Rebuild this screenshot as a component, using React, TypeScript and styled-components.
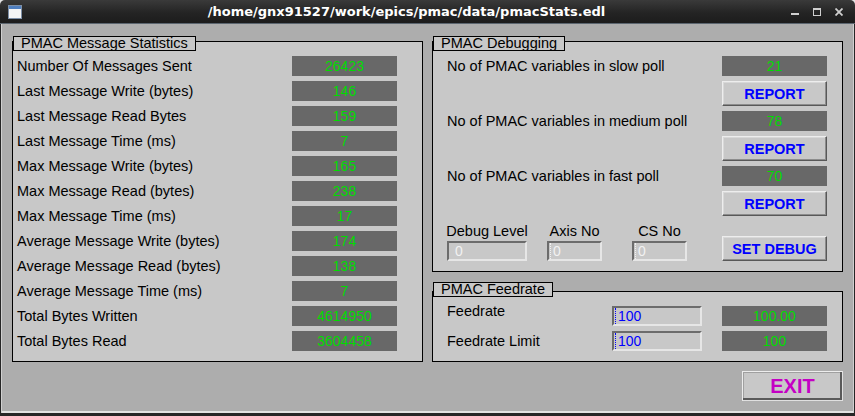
import styled, { createGlobalStyle } from "styled-components";

const GlobalStyle = createGlobalStyle`
  html, body {
    margin: 0;
    padding: 0;
    background: #e4e4e4;
  }
  body {
    font-family: "Liberation Sans", Arial, sans-serif;
  }
`;

const stats = [
  { label: "Number Of Messages Sent", value: "26423" },
  { label: "Last Message Write (bytes)", value: "146" },
  { label: "Last Message Read Bytes", value: "159" },
  { label: "Last Message Time (ms)", value: "7" },
  { label: "Max Message Write (bytes)", value: "165" },
  { label: "Max Message Read (bytes)", value: "238" },
  { label: "Max Message Time (ms)", value: "17" },
  { label: "Average Message Write (bytes)", value: "174" },
  { label: "Average Message Read (bytes)", value: "138" },
  { label: "Average Message Time (ms)", value: "7" },
  { label: "Total Bytes Written", value: "4614950" },
  { label: "Total Bytes Read", value: "3604458" },
];

const polls = [
  { label: "No of PMAC variables in slow poll", value: "21" },
  { label: "No of PMAC variables in medium poll", value: "78" },
  { label: "No of PMAC variables in fast poll", value: "70" },
];

const WindowIcon = () => (
  <svg width="14" height="14" viewBox="0 0 14 14">
    <rect x="0.5" y="0.5" width="13" height="13" fill="#f4f4f4" stroke="#7d8fa6" />
    <rect x="1" y="1" width="12" height="3" fill="#4f7fc0" />
  </svg>
);

const MinIcon = () => (
  <svg width="8" height="8" viewBox="0 0 8 8">
    <rect x="0" y="5" width="8" height="2" fill="#cfcfcf" />
  </svg>
);

const MaxIcon = () => (
  <svg width="8" height="8" viewBox="0 0 8 8">
    <rect x="0.5" y="0.5" width="7" height="7" fill="none" stroke="#cfcfcf" />
    <rect x="0" y="0" width="8" height="2" fill="#cfcfcf" />
  </svg>
);

const CloseIcon = () => (
  <svg width="8" height="8" viewBox="0 0 8 8">
    <path d="M0.5 0.5 L7.5 7.5 M7.5 0.5 L0.5 7.5" stroke="#cfcfcf" strokeWidth="1.8" />
  </svg>
);

const App = () => {
  return (
    <>
      <GlobalStyle />
      <Window>
        <TitleBar>
          <WindowIcon />
          <Title>/home/gnx91527/work/epics/pmac/data/pmacStats.edl</Title>
          <Controls>
            <MinIcon />
            <MaxIcon />
            <CloseIcon />
          </Controls>
        </TitleBar>
        <Body>
          <Column>
            <Section>
              <Tab>PMAC Message Statistics</Tab>
              <Frame $overlap={-10} $pad="14px 25px 10px 4px">
                <StatsGrid>
                  {stats.map((s) => (
                    <Row key={s.label}>
                      <Label>{s.label}</Label>
                      <Value>{s.value}</Value>
                    </Row>
                  ))}
                </StatsGrid>
              </Frame>
            </Section>
          </Column>
          <Column>
            <Section>
              <Tab>PMAC Debugging</Tab>
              <Frame $overlap={-10} $pad="14px 15px 10px 14px">
                <DebugGrid>
                  {polls.map((p) => (
                    <Row key={p.label}>
                      <Label>{p.label}</Label>
                      <Value>{p.value}</Value>
                      <span />
                      <Button>REPORT</Button>
                    </Row>
                  ))}
                  <DebugFields>
                    <Field $w={80}>
                      <FieldLabel>Debug Level</FieldLabel>
                      <Entry $pad={6} $color="#f2f2f2">0</Entry>
                    </Field>
                    <Field $w={55} $ml={20}>
                      <FieldLabel>Axis No</FieldLabel>
                      <Entry $pad={1} $color="#f2f2f2">
                        <Caret $color="#f2f2f2" />0
                      </Entry>
                    </Field>
                    <Field $w={55} $ml={30}>
                      <FieldLabel>CS No</FieldLabel>
                      <Entry $pad={1} $color="#f2f2f2">
                        <Caret $color="#f2f2f2" />0
                      </Entry>
                    </Field>
                  </DebugFields>
                  <Button style={{ alignSelf: "end" }}>SET DEBUG</Button>
                </DebugGrid>
              </Frame>
            </Section>
            <Section $mt={10}>
              <Tab>PMAC Feedrate</Tab>
              <Frame $overlap={-6} $pad="14px 15px 10px 14px">
                <FeedGrid>
                  <Label $shift={-5}>Feedrate</Label>
                  <Entry $pad={1} $color="#0000ff">
                    <Caret $color="#0000ff" />100
                  </Entry>
                  <Value>100.00</Value>
                  <Label>Feedrate Limit</Label>
                  <Entry $pad={1} $color="#0000ff">
                    <Caret $color="#0000ff" />100
                  </Entry>
                  <Value>100</Value>
                </FeedGrid>
              </Frame>
            </Section>
            <ExitButton>EXIT</ExitButton>
          </Column>
        </Body>
      </Window>
    </>
  );
};

export default App;

const Window = styled.div`
  width: 855px;
  height: 416px;
  display: flex;
  flex-direction: column;
  overflow: hidden;
`;

const TitleBar = styled.div`
  height: 23px;
  border-bottom: 1px solid #5c6670;
  border-radius: 5px 5px 0 0;
  background: linear-gradient(#3a3a3a, #242424 55%, #1c1c1c);
  display: flex;
  align-items: center;
  padding: 0 12px 0 8px;
  color: #ffffff;
`;

const Title = styled.div`
  flex: 1;
  text-align: center;
  font-family: "DejaVu Sans", sans-serif;
  font-weight: bold;
  font-size: 13px;
  white-space: nowrap;
`;

const Controls = styled.div`
  display: flex;
  align-items: center;
  gap: 14px;
`;

const Body = styled.div`
  flex: 1;
  display: flex;
  gap: 9px;
  padding: 12px 11px 0;
  background: #adadad;
  border: 1px solid #262626;
  border-top: none;
  border-bottom-width: 3px;
  box-shadow: inset 1px 0 #d0d0d0, inset -1px 0 #d0d0d0, inset 0 -2px #e2e2e2;
`;

const Column = styled.div`
  width: 411px;
  display: flex;
  flex-direction: column;
`;

const Section = styled.div<{ $mt?: number }>`
  display: flex;
  flex-direction: column;
  align-items: flex-start;
  margin-top: ${(p) => p.$mt ?? 0}px;
`;

const Tab = styled.div`
  position: relative;
  z-index: 1;
  margin-left: 1px;
  height: 13px;
  line-height: 13px;
  padding: 0 7px;
  border: 1px solid #000000;
  background: #c8c8c8;
  font-size: 14.5px;
  color: #000000;
  white-space: nowrap;
`;

const Frame = styled.div<{ $overlap: number; $pad: string }>`
  align-self: stretch;
  margin-top: ${(p) => p.$overlap}px;
  border: 1px solid #000000;
  background: #c8c8c8;
  padding: ${(p) => p.$pad};
`;

const StatsGrid = styled.div`
  display: grid;
  grid-template-columns: 1fr 105px;
  grid-auto-rows: 20px;
  row-gap: 5px;
  align-items: center;
`;

const Row = styled.div`
  display: contents;
`;

const Label = styled.div<{ $shift?: number }>`
  font-size: 14.5px;
  line-height: 20px;
  color: #000000;
  white-space: nowrap;
  align-self: ${(p) => (p.$shift ? "start" : "center")};
  margin-top: ${(p) => p.$shift ?? 0}px;
`;

const Value = styled.div`
  height: 20px;
  line-height: 20px;
  background: #686868;
  color: #00dc00;
  font-size: 14px;
  text-align: center;
`;

const Button = styled.button`
  height: 25px;
  box-sizing: border-box;
  padding: 0;
  background: #c8c8c8;
  border: 1px solid;
  border-color: #ededed #585858 #585858 #ededed;
  box-shadow: inset -1px -1px #8c8c8c, inset 1px 1px #d8d8d8;
  color: #0000ff;
  font-family: "Liberation Sans", Arial, sans-serif;
  font-weight: bold;
  font-size: 14.5px;
`;

const DebugGrid = styled.div`
  display: grid;
  grid-template-columns: 1fr 105px;
  grid-template-rows: 20px 25px 20px 25px 20px 25px 40px;
  row-gap: 5px;
  align-items: center;
`;

const DebugFields = styled.div`
  display: flex;
  align-items: flex-end;
  align-self: end;
`;

const Field = styled.div<{ $w: number; $ml?: number }>`
  width: ${(p) => p.$w}px;
  margin-left: ${(p) => p.$ml ?? 0}px;
  display: flex;
  flex-direction: column;
  align-items: center;
`;

const FieldLabel = styled.div`
  font-size: 14.5px;
  line-height: 16px;
  margin-bottom: 2px;
  color: #000000;
  white-space: nowrap;
`;

const Entry = styled.div<{ $pad: number; $color: string }>`
  box-sizing: border-box;
  width: 100%;
  height: 20px;
  display: flex;
  align-items: center;
  padding-left: ${(p) => p.$pad}px;
  border: 2px solid;
  border-color: #6c6c6c #e6e6e6 #e6e6e6 #6c6c6c;
  background: #c8c8c8;
  color: ${(p) => p.$color};
  font-size: 14px;
`;

const Caret = styled.span<{ $color: string }>`
  align-self: stretch;
  width: 0;
  margin-right: 2px;
  border-left: 1px dotted ${(p) => p.$color};
`;

const FeedGrid = styled.div`
  display: grid;
  grid-template-columns: 1fr 90px 105px;
  grid-auto-rows: 20px;
  column-gap: 20px;
  row-gap: 5px;
  align-items: center;
`;

const ExitButton = styled.button`
  align-self: flex-end;
  margin-top: 9px;
  width: 101px;
  height: 30px;
  box-sizing: border-box;
  padding: 0;
  background: #c8c8c8;
  border: 1px solid;
  border-color: #ededed #e0e0e0 #e0e0e0 #ededed;
  box-shadow: inset -2px -2px #5a5a5a, inset 1px 1px #a0a0a0;
  color: #c400c4;
  font-family: "Liberation Sans", Arial, sans-serif;
  font-weight: bold;
  font-size: 20px;
`;
